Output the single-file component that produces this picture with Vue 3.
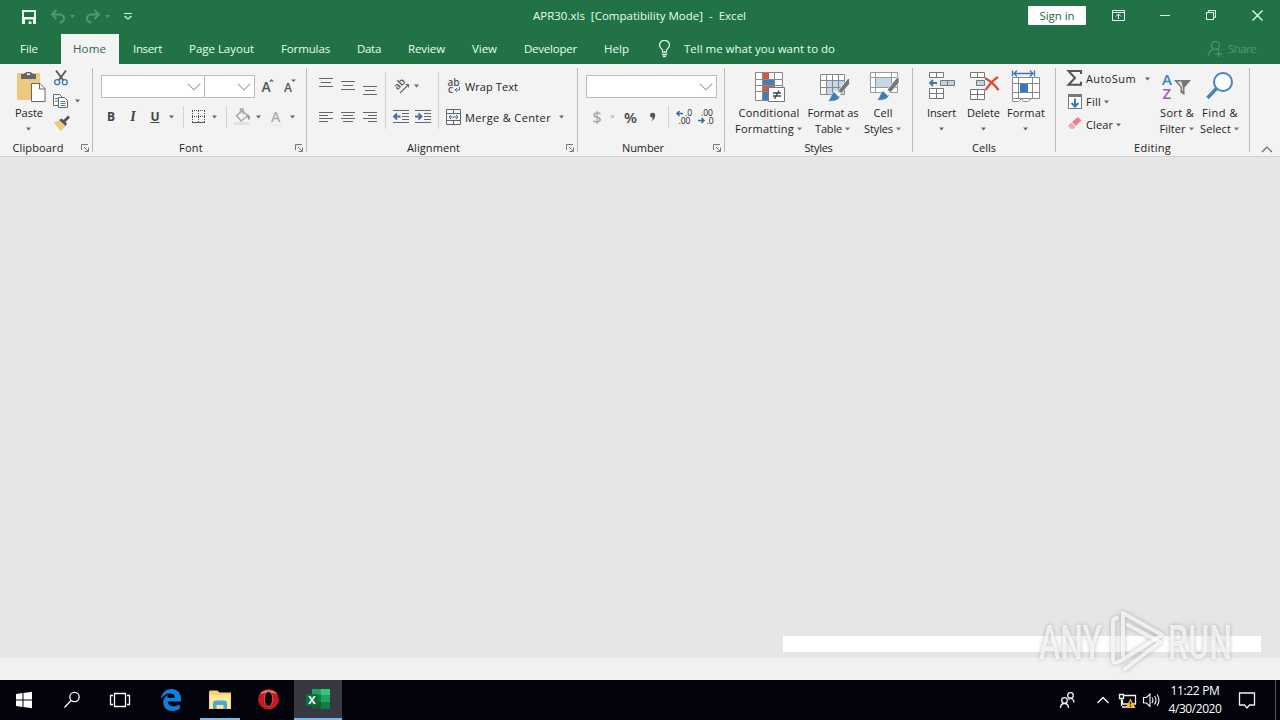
<script setup>
import { h } from 'vue'

// Spreads a label over a given width by adjusting its tracking.
const vFit = {
  mounted(el, { value }) {
    const r = document.createRange()
    r.selectNodeContents(el)
    const natural = r.getBoundingClientRect().width
    el.style.letterSpacing = (value - natural) / el.textContent.length + 'px'
    el.style.width = value + 'px'
  }
}

const Caret = () =>
  h('svg', { width: 6, height: 4, viewBox: '0 0 6 4' }, [h('path', { d: 'M0 .5h5L2.500 3.500z', fill: 'currentColor' })])
const Launcher = () =>
  h('svg', { width: 8, height: 8, viewBox: '0 0 8 8', fill: 'none', stroke: '#777' }, [
    h('path', { d: 'M.5 6V.5H7M3 3l4 4M7.5 3.5v4h-4' })
  ])
const Chevron = () =>
  h('svg', { width: 14, height: 8, viewBox: '0 0 14 8', fill: 'none', stroke: '#aaa', 'stroke-width': 1.2 }, [
    h('path', { d: 'M.7 .7 7 7 13.3 .7' })
  ])

const tabs = [
  ['File', 18], ['Home', 33], ['Insert', 29], ['Page Layout', 65], ['Formulas', 49], ['Data', 24],
  ['Review', 37], ['View', 25], ['Developer', 53], ['Help', 25]
]
const alignTop = [
  { x: 315, d: 'M319 78.5h14M321 82.5h10M319 86.5h14' },
  { x: 337, d: 'M341 81.5h14M343 85.5h10M341 89.5h14' },
  { x: 359, d: 'M363 86.5h14M365 90.5h10M363 94.5h14' }
]
const alignBottom = [
  { x: 315, d: 'M319 112.5h14M319 115.5h9M319 118.5h14M319 121.5h9' },
  { x: 337, d: 'M341 112.5h14M343 115.5h10M341 118.5h14M343 121.5h10' },
  { x: 359, d: 'M363 112.5h14M368 115.5h9M363 118.5h14M368 121.5h9' }
]
</script>

<template>
  <div class="window">
    <header class="title">
      <svg class="quick" width="140" height="34" viewBox="0 0 140 34" fill="none">
        <path d="M22 10h14v14H22z" fill="#eefff5" />
        <path d="M24 12h10v5H24zM25 19.5h8V24h-1.6v-2.6h-2.8V24H25z" fill="#217346" />
        <g stroke="#4e9970" stroke-width="2">
          <path d="M52 14.5h7.5c6 0 6 8 0 8M56.5 10 52 14.5l4.5 4.5" />
          <path d="M99 14.5h-7.500c-6 0-6 8 0 8M94.500 10 99 14.500l-4.500 4.500" />
        </g>
        <path d="M70 15h5l-2.500 3zM105 15h5l-2.500 3z" fill="#4e9970" />
        <path d="M124 13.500h8M124.500 16l3.500 3 3.500-3" stroke="#d8f5e4" stroke-width="1.200" />
      </svg>
      <span v-fit="213" class="doc">APR30.xls&nbsp; [Compatibility Mode]&nbsp; -&nbsp; Excel</span>
      <button class="signin"><span v-fit="35">Sign in</span></button>
      <svg class="controls" width="180" height="34" viewBox="1100 0 180 34" fill="none" stroke="#eafff2">
        <path d="M1112.500 10.500h12v10h-12zM1112.500 12.500h12M1118.500 19v-5M1116 16.500l2.500-2.500 2.500 2.500" />
        <path d="M1160 15.500h10" />
        <path d="M1206.500 12.500h7v7h-7zM1208.500 12.500v-2h7v7h-2" />
        <path d="m1252.500 10.500 10 10m0-10-10 10" stroke-width="1.300" />
      </svg>
    </header>

    <nav class="tabs">
      <div v-for="[name, w] in tabs" :key="name" class="tab" :class="{ active: name === 'Home', file: name === 'File' }">
        <span v-fit="w">{{ name }}</span>
      </div>
      <div class="tell">
        <svg width="14" height="18" viewBox="658 40 14 18" fill="none" stroke="#dff8e9" stroke-width="1.300">
          <path d="M662.500 52v-1.500c0-2-3-2.500-3-5.500a5 4.700 0 0 1 10 0c0 3-3 3.500-3 5.500V52zM662 54.500h5M663 56.500h3" />
        </svg>
        <span v-fit="151">Tell me what you want to do</span>
      </div>
      <div class="share">
        <svg width="16" height="17" viewBox="1207 40 16 17" fill="none" stroke="#4e9970" stroke-width="1.200">
          <circle cx="1215.500" cy="45.500" r="4" />
          <path d="M1208.500 56c0-4 2-6 5-6.500M1218 49.500l1 .6M1215 54h7.500M1218.700 50.500V57" />
        </svg>
        <span v-fit="28">Share</span>
      </div>
    </nav>

    <section class="ribbon">
      <div class="group clipboard">
        <div class="body">
          <div class="big paste">
            <svg width="38" height="40" viewBox="10 64 38 40">
              <path d="M17 73h23v27H17z" fill="#edc87e" />
              <path d="M21 74h3c0-1 2-1 2.500-2h4c.5 1 2.500 1 2.500 2h3v5H21z" fill="#666" />
              <path d="M27 73.500h3v1.500h-3z" fill="#fff" />
              <path d="M31.500 83.500h8.500l5 5V101.500H31.500z" fill="#fff" stroke="#666" />
              <path d="M39.500 83.500v5.500h5.500" fill="none" stroke="#666" />
            </svg>
            <span v-fit="28">Paste</span>
            <i class="c"><Caret /></i>
          </div>
          <div class="stack">
            <svg width="24" height="23" viewBox="48 66 24 23" fill="none">
              <path d="m56 70.500 7.500 10M66 70.500l-7.500 10" stroke="#555" stroke-width="1.800" />
              <circle cx="57.200" cy="82.200" r="2.500" stroke="#4179a8" stroke-width="1.300" /><circle cx="64.800" cy="82.200" r="2.500" stroke="#4179a8" stroke-width="1.300" />
            </svg>
            <div class="row23">
              <svg width="24" height="23" viewBox="48 89 24 23" fill="#fff" stroke="#666">
                <path d="M53.500 94.500h6l3 3v8h-9z" /><path d="M55 98.500h4M55 101h4" stroke="#4179a8" />
                <path d="M58.500 97.500h6l3 3v7h-9z" /><path d="M60.500 101.500h5M60.500 103.500h5M60.500 105.500h5" stroke="#4179a8" />
              </svg>
              <i class="c w12"><Caret /></i>
            </div>
            <svg width="24" height="23" viewBox="48 112 24 23">
              <path d="m54 122.500 5-2 6.500 6-5 4.500z" fill="#edc87e" />
              <path d="m59 120 2.500-1.500 2 1.500 4.500-4.500 2 2-4.500 4.500 1.500 1.500-1.500 2.500z" fill="#555" />
            </svg>
          </div>
        </div>
        <footer><span v-fit="51">Clipboard</span><Launcher /></footer>
      </div>

      <div class="group font">
        <div class="body rows">
          <div class="row">
            <div class="combo name"><Chevron /></div>
            <div class="combo size"><Chevron /></div>
            <svg class="grow" width="45" height="26" viewBox="256 73 45 26">
              <text x="261.500" y="92" class="aa">A</text><path d="M269 81.500h5l-2.500-2.500z" fill="#4a6a8c" />
              <text x="284" y="92" class="aa small">A</text><path d="M291 79.500h5l-2.500 2.500z" fill="#4a6a8c" />
            </svg>
          </div>
          <div class="row tools">
            <b class="c w22">B</b><b class="c w22 it">I</b><b class="c w22 un">U</b>
            <i class="c w12"><Caret /></i><i class="c w10 sep"></i>
            <svg width="21" height="26" viewBox="188 104 21 26" fill="none" stroke="#555">
              <path d="M192.500 111v12M198.500 111v12M204.500 111v12M192 110.500h13M192 116.500h13" stroke-dasharray="1 1" /><path d="M192 122.500h13" />
            </svg>
            <i class="c w12"><Caret /></i><i class="c w10 sep"></i>
            <svg width="22" height="26" viewBox="231 104 22 26" fill="none" stroke="#aaa" stroke-width="1.500">
              <path d="m236.500 115.500 6-5 5 5.500-6.500 5zM240.500 113.500v-4.500h2.500v5" /><path d="M247 114c3 1 3.500 3 2.500 6-1.500 0-2.500-3-2.500-6z" fill="#999" stroke="none" /><path d="M234 123.500h16" stroke="#e2e2e2" stroke-width="3" />
            </svg>
            <i class="c w12"><Caret /></i>
            <svg width="22" height="26" viewBox="265 104 22 26"><text x="271" y="122" class="aa gray">A</text><path d="M270 123.500h13v2.500h-13z" fill="#ececec" /></svg>
            <i class="c w12"><Caret /></i>
          </div>
        </div>
        <footer><span v-fit="24">Font</span><Launcher /></footer>
      </div>

      <div class="group alignment">
        <div class="body rows cols">
          <div class="col">
            <div class="row"><svg v-for="a in alignTop" :key="a.x" width="22" height="26" :viewBox="`${a.x} 73 22 26`"><path :d="a.d" stroke="#666" /></svg></div>
            <div class="row"><svg v-for="a in alignBottom" :key="a.x" width="22" height="26" :viewBox="`${a.x} 104 22 26`"><path :d="a.d" stroke="#666" /></svg></div>
          </div>
          <i class="vsep"></i>
          <div class="col mid">
            <div class="row">
              <svg width="22" height="26" viewBox="390 73 22 26">
                <text x="0" y="0" transform="translate(397.500 90.500) rotate(-45)" class="ab">ab</text>
                <path d="m400 93 8.500-8.500M405.500 84.500h3v3" fill="none" stroke="#666" stroke-width="1.200" />
              </svg>
              <i class="c car9"><Caret /></i>
            </div>
            <div class="row">
              <svg width="22" height="26" viewBox="390 104 22 26" fill="none" stroke="#666">
                <path d="M393 110.500h16M402 113.500h7M402 116.500h7M402 119.500h7M393 122.500h16" /><path d="M394 116.500h6.500M397 113.500l-3 3 3 3" stroke="#3b73af" stroke-width="1.800" />
              </svg>
              <svg width="22" height="26" viewBox="412 104 22 26" fill="none" stroke="#666">
                <path d="M415 110.500h16M424 113.500h7M424 116.500h7M424 119.500h7M415 122.500h16" /><path d="M415 116.500h6.500M418.500 113.500l3 3-3 3" stroke="#3b73af" stroke-width="1.800" />
              </svg>
            </div>
          </div>
          <i class="vsep"></i>
          <div class="col">
            <div class="row">
              <svg width="22" height="26" viewBox="443 73 22 26"><text x="447.500" y="85.500" class="wr" textLength="12">ab</text><text x="448" y="93" class="wr">c</text><path d="M459.500 87v3h-4M457 88l-2 2 2 2" fill="none" stroke="#3b73af" /></svg>
              <span v-fit="53">Wrap Text</span>
            </div>
            <div class="row">
              <svg width="22" height="26" viewBox="443 104 22 26" fill="none" stroke="#666"><path d="M446.500 109.500h14v15h-14zM446.500 113.500h14M446.500 120.500h14M453.500 109.500v4M453.500 120.500v4" /><path d="M449 117h9M451 115l-2 2 2 2M456 115l2 2-2 2" stroke="#3b73af" /></svg>
              <span v-fit="86">Merge &amp; Center</span>
              <i class="c w22"><Caret /></i>
            </div>
          </div>
        </div>
        <footer><span v-fit="53">Alignment</span><Launcher /></footer>
      </div>

      <div class="group number">
        <div class="body rows">
          <div class="row"><div class="combo fmt"><Chevron /></div></div>
          <div class="row">
            <span class="c w22 cur">$</span><i class="c dim w10"><Caret /></i>
            <span class="c pct">%</span>
            <svg width="20" height="26" viewBox="643 104 20 26"><path d="M650 115a2.600 2.600 0 0 1 5.200 .5c0 2.500-1.500 5-4 5.500 1-1 1.500-2 1.500-3.200-1.500 0-2.700-1-2.700-2.800z" fill="#555" /></svg>
            <i class="c w10 sep"></i>
            <svg width="44" height="26" viewBox="673 104 44 26">
              <text x="685" y="116" class="dec">.0</text><text x="678.500" y="123.500" class="dec">.00</text>
              <text x="701" y="116" class="dec">.00</text><text x="706.500" y="123.500" class="dec">.0</text>
              <path d="M677 113.500h6M679.500 111l-2.500 2.500 2.500 2.500M698 120.500h6M701.500 118l2.500 2.500-2.500 2.500" fill="none" stroke="#37699c" stroke-width="1.500" />
            </svg>
          </div>
        </div>
        <footer><span v-fit="42">Number</span><Launcher /></footer>
      </div>

      <div class="group styles">
        <div class="body">
          <div class="big cf">
            <svg width="74" height="40" viewBox="732 64 74 40">
              <path d="M755.500 72.500h27v28h-27z" fill="#fff" />
              <path d="M763 73h6v6h-6zM763 85h11v6h-11z" fill="#d8593a" /><path d="M763 79h11v6h-11zM763 91h6v9h-6z" fill="#4280b8" />
              <path d="M755.500 72.500h27v28h-27zM762.500 73v27M774.500 73v27M755.500 79.500h27M755.500 85.500h27M755.500 91.500h27" fill="none" stroke="#888" />
              <path d="M768.500 87.500h16v14h-16z" fill="#fff" stroke="#777" />
              <path d="M773 93h8M773 96h8M779 90.500l-4.500 8.500" stroke="#444" stroke-width="1.300" />
            </svg>
            <span v-fit="61">Conditional</span>
            <div class="line"><span v-fit="59">Formatting</span><Caret /></div>
          </div>
          <div class="big ft">
            <svg width="54" height="40" viewBox="806 64 54 40">
              <path d="M820.500 74.500h24v19h-24z" fill="#fff" /><path d="M827 81h17v13h-17z" fill="#c5d8ea" />
              <path d="M820.500 74.500h24v20h-24zM826.500 74v20M832.500 74v20M838.500 74v20M820.500 80.500h24M820.500 87.500h24" fill="none" stroke="#888" />
              <path d="m838 91 9.500-12 2-1v6l-8 9.500z" fill="#777" stroke="#fff" stroke-width=".7" />
              <path d="M827 101c4-1 3-7 8-10l5.500 4c-1 6-7 7-13.500 6z" fill="#3f7fb8" stroke="#fff" stroke-width=".7" /><path d="m834 92 2-1.500 4.500 3.500-1.500 3z" fill="#fff" />
            </svg>
            <span v-fit="51">Format as</span>
            <div class="line"><span v-fit="27">Table</span><Caret /></div>
          </div>
          <div class="big cs">
            <svg width="46" height="40" viewBox="860 64 46 40">
              <path d="M870.500 72.500h27v20h-27z" fill="#fff" /><path d="M876 78h15v9h-15z" fill="#c5d8ea" />
              <path d="M870.500 72.500h27v20h-27zM875.500 72v21M891.500 72v21M870.500 77.500h27M870.500 87.500h27" fill="none" stroke="#999" />
              <path d="m887 90 9.500-12 2.500-1v6l-8.500 9.500z" fill="#777" stroke="#fff" stroke-width=".7" />
              <path d="M876 100c4-1 3-7 8-10l5.500 4c-1 6-7 7-13.500 6z" fill="#3f7fb8" stroke="#fff" stroke-width=".7" /><path d="m883 91 2-1.500 4.500 3.500-1.500 3z" fill="#fff" />
            </svg>
            <span v-fit="19">Cell</span>
            <div class="line"><span v-fit="29">Styles</span><Caret /></div>
          </div>
        </div>
        <footer><span v-fit="28">Styles</span></footer>
      </div>

      <div class="group cells">
        <div class="body">
          <div class="big ins">
            <svg width="41" height="40" viewBox="921 64 41 40" fill="#fff" stroke="#777">
              <path d="M929.500 72.500h14v5h-14zM936.500 72.500v5M929.500 88.500h14v10h-14zM936.500 88.500v10M929.500 93.500h14" />
              <path d="M940.500 80.500h14v5h-14zM947.500 80.500v5" fill="#bfd3e6" /><path d="M930 83h7M933 80l-3 3 3 3" stroke="#3878b8" stroke-width="1.800" fill="none" />
            </svg>
            <span v-fit="29">Insert</span><i class="c"><Caret /></i>
          </div>
          <div class="big del">
            <svg width="43" height="40" viewBox="962 64 43 40" fill="#fff" stroke="#777">
              <path d="M970.500 72.500h14v5h-14zM977.500 72.500v5M970.500 89.500h14v10h-14zM977.500 89.500v10M970.500 94.500h14" />
              <path d="M976.500 80.500h8v5h-8z" fill="#bfd3e6" /><path d="M985 78c5 3 10 7 13.500 12M998 77c-5 3-9 8-12.500 13" stroke="#dc4c35" stroke-width="2.300" fill="none" />
            </svg>
            <span v-fit="33">Delete</span><i class="c"><Caret /></i>
          </div>
          <div class="big for">
            <svg width="42" height="40" viewBox="1005 64 42 40" fill="#fff" stroke="#888">
              <path d="M1012.500 98.500v3h6l3-3 2 3h4l4-3" />
              <path d="M1012.500 77.500h27v21h-27zM1018.500 77.500v21M1032.500 77.500v21M1012.500 83.500h27M1012.500 92.500h27" />
              <path d="M1020 84h8v8h-8z" fill="#3678b8" stroke="none" /><path d="M1012.500 70.500v6M1034.500 70.500v6M1014 73.500h19M1017 70.500l-3 3 3 3M1030 70.500l3 3-3 3" fill="none" stroke="#3878b8" stroke-width="1.300" />
            </svg>
            <span v-fit="38">Format</span><i class="c"><Caret /></i>
          </div>
        </div>
        <footer><span v-fit="24">Cells</span></footer>
      </div>

      <div class="group editing">
        <div class="body">
          <div class="stack ed">
            <div class="row23">
              <svg width="20" height="23" viewBox="1066 67 20 23" fill="none" stroke="#555" stroke-width="2"><path d="M1081 74v-3h-12.500l6.500 7-6.500 6.800h12.500v-3" /></svg>
              <span v-fit="50">AutoSum</span><i class="c far"><Caret /></i>
            </div>
            <div class="row23">
              <svg width="20" height="23" viewBox="1066 90 20 23" fill="#fff" stroke="#777"><path d="M1068.500 94.500h13v14h-13z" /><path d="M1068 94h14v3h-14z" fill="#777" stroke="none" /><path d="M1075 98.500v8M1071.500 103l3.500 3.500 3.500-3.500" stroke="#3878b8" stroke-width="2" fill="none" /></svg>
              <span v-fit="15">Fill</span><i class="near"><Caret /></i>
            </div>
            <div class="row23">
              <svg width="20" height="23" viewBox="1066 113 20 23"><path d="m1072 122 6-5 3.500 3.500-6 5.500z" fill="#ed7d91" /><path d="m1071 122.500 4.500 4.500-2 2h-2.500l-3-3z" fill="#f4a8b5" /></svg>
              <span v-fit="27">Clear</span><i class="near"><Caret /></i>
            </div>
          </div>
          <div class="big sort">
            <svg width="40" height="40" viewBox="1157 64 40 40"><text x="1162" y="85" class="az" fill="#4380b8">A</text><text x="1162.500" y="99" class="az" fill="#9c5cb0">Z</text><path d="M1174 80h17l-6.500 7.500v7.500l-4-2.500v-5z" fill="#777" /><path d="M1177.500 81.500h4l1.500 7v2.500l-1-.6v-2.800z" fill="#ddd" /></svg>
            <span v-fit="34">Sort &amp;</span>
            <div class="line"><span v-fit="26">Filter</span><Caret /></div>
          </div>
          <div class="big find">
            <svg width="44" height="40" viewBox="1198 64 44 40" fill="none" stroke="#4484bb"><circle cx="1223" cy="82" r="9" stroke-width="2" fill="#fdfdfd" /><path d="m1216.500 88.500-9 9.500" stroke-width="3.500" /></svg>
            <span v-fit="36">Find &amp;</span>
            <div class="line"><span v-fit="31">Select</span><Caret /></div>
          </div>
        </div>
        <footer><span v-fit="37">Editing</span></footer>
      </div>
      <svg class="collapse" width="12" height="7" viewBox="0 0 12 7"><path d="M1 6l5-5 5 5" fill="none" stroke="#666" stroke-width="1.200" /></svg>
    </section>

    <main class="work">
      <div class="bar"></div>
      <svg class="mark" width="204" height="74" viewBox="1036 604 204 74">
        <g fill="#fff" fill-opacity=".72">
          <text x="1039" y="659" textLength="63" lengthAdjust="spacingAndGlyphs">ANY</text>
          <text x="1168" y="659" textLength="64" lengthAdjust="spacingAndGlyphs">RUN</text>
        </g>
        <g fill="none" stroke="#fff" stroke-opacity=".75" stroke-width="4" stroke-linejoin="round" stroke-linecap="round">
          <path d="M1123 656v-43l39 22-42 26q-7 4-7-2v-36q0-5 4-5" />
          <path d="m1128 625 32 17-35 27" />
        </g>
      </svg>
    </main>
    <div class="status"></div>

    <footer class="taskbar">
      <svg width="294" height="40" viewBox="0 680 294 40" fill="none">
        <path d="m16 694 6.500-1v6.500H16zM23.500 692.900l8.500-1.200v7.800h-8.500zM16 700.500h6.500v6.600l-6.500-1zM23.500 700.500H32v7.800l-8.500-1.200z" fill="#fff" />
        <g stroke="#fff" stroke-width="1.300"><circle cx="74.500" cy="697" r="4.700" /><path d="m71 700.500-6.500 7M114.500 693.500h11v13h-11zM113 695.500h-2.500v9h2.500M127 695.500h2.500v9H127" /></g>
        <path d="M161 699c1-7 5-10 10.500-10 7 0 10 5 9.700 12.500h-13.400c.3 5.500 7 6 12 3v4.500c-9 4.500-17 .500-16.500-7 .2-4 2.800-6 5.500-7.500-1 1.200-1.400 2-1.500 3.300h7.500c0-3-1.600-4.300-5-4.300-3.500 0-6.500 2-8.800 5.500z" fill="#0b80dc" />
        <path d="M209 692q0-1.500 1.500-1.500h7l2 2h11.500V709h-22z" fill="#f4d274" /><path d="M209.500 695h21v13h-21z" fill="#fde69a" /><path d="M213 709v-5.500q0-3 3-3h8q3 0 3 3v5.500h-3.500v-4h-7v4z" fill="#48a9d8" />
        <ellipse cx="268.500" cy="699.300" rx="10.500" ry="10.300" fill="#c5191f" /><path d="M260 694c3-5 14-5 17 0q-8-3-17 0z" fill="#ef7772" /><ellipse cx="268.500" cy="699" rx="4.200" ry="7.500" fill="#120306" stroke="#f4b5b0" stroke-width=".5" />
        <path d="M200 718h40v2h-40z" fill="#76b9ed" />
      </svg>
      <div class="excel">
        <svg width="48" height="38" viewBox="294 680 48 38">
          <path d="M312 689h18v20h-18z" fill="#21a366" /><path d="M321 689h9v6h-9z" fill="#33c481" /><path d="M312 695h9v7h-9z" fill="#107c41" /><path d="M312 702h18v7h-18z" fill="#185c37" /><path d="M321 702h9v7h-9z" fill="#107c41" /><path d="M306 694h12v12h-12z" fill="#0c703a" />
          <text x="308.200" y="704" class="x">X</text>
        </svg>
      </div>
      <div class="space"></div>
      <svg width="116" height="40" viewBox="1050 680 116 40" fill="none" stroke="#f2f2f2" stroke-width="1.300">
        <circle cx="1070.500" cy="695.500" r="2.800" /><circle cx="1064.500" cy="700.500" r="2.800" /><path d="M1060.500 708c0-6 8-6 8 0M1068.500 699.500c3-2.500 5.500 0 5.500 3" />
        <path d="m1097.500 703 5.500-5.500 5.500 5.500" stroke-width="1.500" />
        <path d="M1124 695.500h11.500v8.500h-13V700M1119.500 694.500h4v4h-4zM1121.500 698.500v7.500M1122 707h5" />
        <path d="m1130.500 698.500 5 9.500h-10z" fill="#f6be28" stroke="none" /><path d="M1130.500 701.500v3M1130.500 705.500v1.300" stroke="#222" />
        <path d="M1143.500 697.500h3l3.500-3.500v12.500l-3.500-3.500h-3zM1152 697.500q2 2.500 0 5.500M1154.500 696q3 4 0 8.500M1157 694.500q4 5.500 0 11.500" stroke-width="1.100" />
      </svg>
      <div class="clock"><span v-fit="49">11:22 PM</span><span v-fit="53">4/30/2020</span></div>
      <svg width="56" height="40" viewBox="1224 680 56 40" fill="none" stroke="#f2f2f2" stroke-width="1.300"><path d="M1239.500 693h15v12h-5l-2.500 3-2.500-3h-5z" /><path d="M1275.500 680v40" stroke="#555" stroke-width="1" /></svg>
    </footer>
  </div>
</template>

<style>
body { margin: 0; overflow: hidden; }
</style>
<style scoped>
.window { width: 1280px; height: 720px; display: flex; flex-direction: column; font: 12px/16px "Open Sans", "Noto Sans", sans-serif; color: #222; background: #e6e6e6; overflow: hidden; }
svg { display: block; flex: none; }
span { white-space: nowrap; flex: none; display: block; }
.title { height: 34px; display: flex; background: #217346; color: #e6fff0; flex: none; font-size: 11.5px; }
.quick { margin-right: 393px; }
.doc { margin-top: 8px; }
.signin { width: 58px; height: 19px; margin: 6px 14px 0 282px; border: 0; border-radius: 1px; padding: 0; background: #fff; color: #2c5f44; font: inherit; line-height: 20px; display: flex; justify-content: center; }
.tabs { height: 30px; display: flex; background: #217346; color: #e6fff0; flex: none; font-size: 11.5px; line-height: 30px; }
.tab { padding: 0 13px 0 14px; display: flex; }
.tab.file { padding: 0 23px 0 20px; }
.tab.active { background: #f3f3f3; color: #2d6548; padding: 0 13px 0 12px; }
.tell { display: flex; gap: 12px; margin-left: 16px; }
.tell svg, .share svg { margin-top: 6px; }
.share { display: flex; margin-left: auto; margin-right: 24px; gap: 5px; color: #4e9970; }
.ribbon { height: 92px; display: flex; background: #f3f3f3; border-bottom: 1px solid #d0d0d0; flex: none; font-size: 11px; }
.group { display: flex; flex-direction: column; box-sizing: border-box; position: relative; }
.group::after { content: ""; position: absolute; right: 0; top: 4px; bottom: 4px; width: 1px; background: #bababa; }
.clipboard { width: 93px; } .font { width: 214px; } .alignment { width: 271px; } .number { width: 147px; }
.styles { width: 188px; } .cells { width: 143px; } .editing { width: 194px; }
.body { height: 76px; display: flex; }
.group > footer { height: 16px; display: flex; justify-content: center; }
.group > footer svg { position: absolute; right: 4px; bottom: 4px; }
.group > footer { padding-right: 1px; }
.clipboard > footer { padding-right: 17px; } .font > footer { padding-right: 18px; } .alignment > footer { padding-right: 18px; } .number > footer { padding-right: 17px; }
.c { display: flex; align-items: center; justify-content: center; flex: none; }
i { font-style: normal; color: #666; }
.w22 { width: 22px; } .w12 { width: 12px; } .w10 { width: 10px; }
.big { display: flex; flex-direction: column; align-items: center; line-height: 16px; flex: none; }
.big > span { margin-top: 1px; }
.big > .c { height: 15px; }
.line { display: flex; align-items: center; gap: 3px; color: #222; }
.line svg { color: #777; }
.paste { width: 38px; margin-left: 10px; }
.stack { padding-top: 2px; }
.row23 { display: flex; height: 23px; align-items: center; }
.rows { flex-direction: column; padding: 9px 0 0 8px; height: 67px; gap: 5px; }
.rows.cols { flex-direction: row; gap: 0; }
.col { display: flex; flex-direction: column; gap: 5px; }
.col .row > span { padding-top: 1px; }
.mid { width: 44px; }
.row { display: flex; align-items: center; height: 26px; flex: none; }
.vsep { width: 9px; height: 57px; margin-top: -1px; background: linear-gradient(#d2d2d2, #d2d2d2) 4px 0 / 1px 100% no-repeat; }
.sep { height: 22px; background: linear-gradient(#d2d2d2, #d2d2d2) 5px 0 / 1px 100% no-repeat; }
.car9 { width: 9px; }
.combo { box-sizing: border-box; height: 23px; border: 1px solid #bcbcbc; background: #fff; display: flex; align-items: center; justify-content: flex-end; padding-right: 3px; }
.combo svg { margin-top: 1px; }
.name { width: 104px; } .size { width: 51px; margin-left: -1px; } .fmt { width: 131px; }
.grow { margin-left: 1px; }
.tools { margin-left: -1px; color: #444; font-size: 12px; }
.it { font-style: italic; font-family: "Liberation Serif", serif; font-size: 14px; }
.un { text-decoration: underline; }
.aa { font: 600 14px "Open Sans", sans-serif; fill: #555; }
.aa.small { font-size: 12px; }
.aa.gray { fill: #aaa; }
.ab { font: 600 10px "Open Sans", sans-serif; fill: #555; }
.wr { font: 600 10px "Open Sans", sans-serif; fill: #555; }
.az { font: 600 15px "Open Sans", sans-serif; }
.dec { font: 8.5px "Open Sans", sans-serif; fill: #222; }
.cur { font-size: 16px; font-weight: 600; color: #aaa; } .dim { color: #bbb; }
.pct { width: 25px; font-size: 15px; color: #444; font-weight: 600; }
.cf { width: 74px; margin-left: 7px; } .ft { width: 54px; } .cs { width: 46px; }
.ins { width: 41px; margin-left: 8px; } .del { width: 43px; } .for { width: 42px; }
.ed { width: 91px; padding: 3px 0 0 10px; } .far { width: 24px; } .near { margin-left: 3px; }
.sort { width: 40px; } .find { width: 44px; margin-left: 1px; }
.collapse { margin: 82px 0 0 11px; }
.work { flex: 1; display: flex; position: relative; align-items: flex-end; background: #e6e6e6; }
.bar { width: 478px; height: 16px; margin: 0 0 6px 783px; background: #fff; }
.mark { position: absolute; left: 1036px; top: 447px; filter: drop-shadow(0 0 2px rgba(90, 90, 90, .55)); }
.mark text { font: 500 48px Roboto, sans-serif; }
.status { height: 22px; background: #f1f1f1; flex: none; }
.taskbar { height: 40px; display: flex; background: #02030b; flex: none; }
.excel { width: 48px; height: 38px; background: #373842; border-bottom: 2px solid #76b9ed; }
.x { font: bold 11px "Open Sans", sans-serif; fill: #fff; }
.space { flex: 1; }
.clock { width: 58px; display: flex; flex-direction: column; align-items: center; color: #fff; line-height: 18px; padding-top: 2px; box-sizing: border-box; }
</style>
